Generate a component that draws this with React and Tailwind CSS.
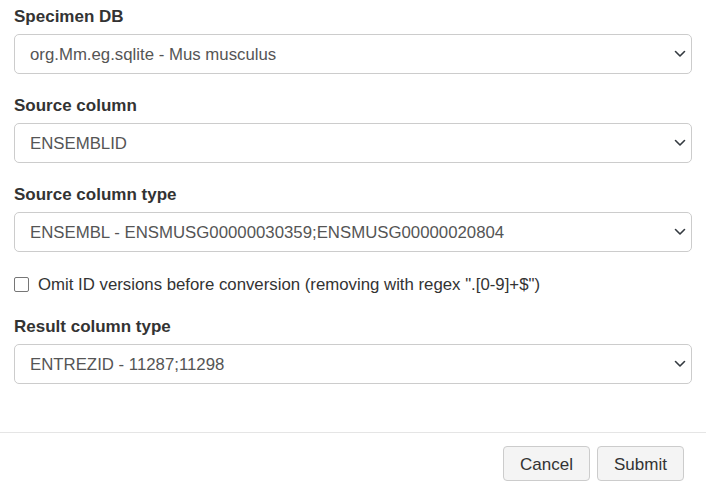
const fields = [
  { id: 'db', label: 'Specimen DB', value: 'org.Mm.eg.sqlite - Mus musculus' },
  { id: 'col', label: 'Source column', value: 'ENSEMBLID' },
  { id: 'type', label: 'Source column type', value: 'ENSEMBL - ENSMUSG00000030359;ENSMUSG00000020804' },
]

function Chevron() {
  return (
    <svg width="12" height="8" viewBox="0 0 12 8" fill="none" className="shrink-0">
      <path d="M1.5 1.5 L6 6 L10.5 1.5" stroke="#343a40" strokeWidth="1.6" strokeLinecap="round" strokeLinejoin="round" />
    </svg>
  )
}

function FakeSelect({ value }) {
  return (
    <div className="h-[40px] flex items-center justify-between border border-[#ccc] rounded-[5px] bg-white pl-[15px] pr-[5px] text-[16.8px] text-[#555]">
      <span className="leading-none pt-[3px]">{value}</span>
      <Chevron />
    </div>
  )
}

function Field({ label, value, className }) {
  return (
    <div className={className}>
      <div className="h-[18px] text-[17px] leading-[18px] font-bold text-[#333] mb-[9px] pt-[1px]">{label}</div>
      <FakeSelect value={value} />
    </div>
  )
}

export default function App() {
  return (
    <div className="w-[706px] h-[484px] bg-white font-['Liberation_Sans',Arial,sans-serif] overflow-hidden">
      <div className="px-[14px] pt-[7px]">
        {fields.map((f, i) => (
          <Field key={f.id} label={f.label} value={f.value} className={i === 0 ? '' : 'mt-[22px]'} />
        ))}

        <div className="mt-[23px] h-[18px] flex items-center gap-[9px] text-[16.8px] text-[#333]">
          <span className="w-[15px] h-[15px] border border-[#767676] rounded-[2px] bg-white shrink-0" />
          <span className="leading-[18px] pt-[1px]">Omit ID versions before conversion (removing with regex ".[0-9]+$")</span>
        </div>

        <Field label="Result column type" value="ENTREZID - 11287;11298" className="mt-[24px]" />
      </div>

      <div className="mt-[48px] border-t border-[#e5e5e5] flex justify-end gap-[7px] pt-[13px] pr-[22px]">
        <button className="w-[87px] h-[35px] rounded-[4px] border border-[#ccc] bg-[#f4f4f4] text-[17px] text-[#333] pt-[2px]">Cancel</button>
        <button className="w-[87px] h-[35px] rounded-[4px] border border-[#ccc] bg-[#f4f4f4] text-[17px] text-[#333] pt-[2px]">Submit</button>
      </div>
    </div>
  )
}
